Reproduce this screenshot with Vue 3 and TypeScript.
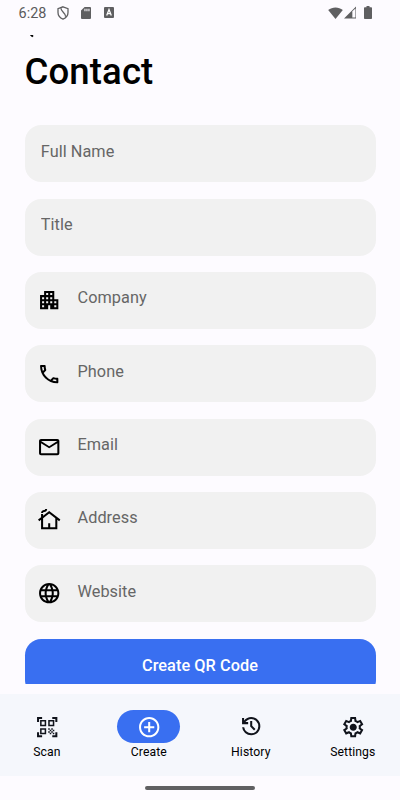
<script setup lang="ts">
import { reactive, ref } from 'vue'

interface Field {
  key: string
  label: string
  icon?: string
}

interface Tab {
  label: string
  icon: string
  viewBox: string
}

const fields: Field[] = [
  { key: 'name', label: 'Full Name' },
  { key: 'title', label: 'Title' },
  {
    key: 'company',
    label: 'Company',
    icon: 'M17 11V3H7v4H3v14h8v-4h2v4h8V11h-4zM7 19H5v-2h2v2zm0-4H5v-2h2v2zm0-4H5V9h2v2zm4 4H9v-2h2v2zm0-4H9V9h2v2zm0-4H9V5h2v2zm4 8h-2v-2h2v2zm0-4h-2V9h2v2zm0-4h-2V5h2v2zm4 12h-2v-2h2v2zm0-4h-2v-2h2v2z',
  },
  {
    key: 'phone',
    label: 'Phone',
    icon: 'M6.54 5c.06.89.21 1.76.45 2.59l-1.2 1.2c-.41-1.2-.67-2.47-.76-3.79h1.51m9.86 12.02c.85.24 1.72.39 2.6.45v1.49c-1.32-.09-2.59-.35-3.8-.75l1.2-1.19M7.5 3H4c-.55 0-1 .45-1 1 0 9.39 7.61 17 17 17 .55 0 1-.45 1-1v-3.49c0-.55-.45-1-1-1-1.24 0-2.45-.2-3.57-.57-.1-.04-.21-.05-.31-.05-.26 0-.51.1-.71.29l-2.2 2.2c-2.83-1.45-5.15-3.76-6.59-6.59l2.2-2.2c.28-.28.36-.67.25-1.02C8.7 6.45 8.5 5.25 8.5 4c0-.55-.45-1-1-1z',
  },
  {
    key: 'email',
    label: 'Email',
    icon: 'M22 6c0-1.1-.9-2-2-2H4c-1.1 0-2 .9-2 2v12c0 1.1.9 2 2 2h16c1.1 0 2-.9 2-2V6zm-2 0l-8 5-8-5h16zm0 12H4V8l8 5 8-5v10z',
  },
  {
    key: 'address',
    label: 'Address',
    icon: 'M12 3L6 7.58V6H4v3.11L1 11.4l1.21 1.59L4 11.62V21h16v-9.38l1.79 1.36L23 11.4 12 3zm6 16h-5v-4h-2v4H6v-8.9l6-4.58 6 4.58V19zM10 1c0 1.66-1.34 3-3 3-.55 0-1 .45-1 1H4c0-1.66 1.34-3 3-3 .55 0 1-.45 1-1h2z',
  },
  {
    key: 'website',
    label: 'Website',
    icon: 'M11.99 2C6.47 2 2 6.48 2 12s4.47 10 9.99 10C17.52 22 22 17.52 22 12S17.52 2 11.99 2zm6.93 6h-2.95c-.32-1.25-.78-2.45-1.38-3.56 1.84.63 3.37 1.91 4.33 3.56zM12 4.04c.83 1.2 1.48 2.53 1.91 3.96h-3.82c.43-1.43 1.08-2.76 1.91-3.96zM4.26 14C4.1 13.36 4 12.69 4 12s.1-1.36.26-2h3.38c-.08.66-.14 1.32-.14 2s.06 1.34.14 2H4.26zm.82 2h2.95c.32 1.25.78 2.45 1.38 3.56-1.84-.63-3.37-1.9-4.33-3.56zm2.95-8H5.08c.96-1.66 2.49-2.93 4.33-3.56C8.81 5.55 8.35 6.75 8.03 8zM12 19.96c-.83-1.2-1.48-2.53-1.91-3.96h3.82c-.43 1.43-1.08 2.76-1.91 3.96zM14.34 14H9.66c-.09-.66-.16-1.32-.16-2s.07-1.35.16-2h4.68c.09.65.16 1.32.16 2s-.07 1.34-.16 2zm.25 5.56c.6-1.11 1.06-2.31 1.38-3.56h2.95c-.96 1.65-2.49 2.93-4.33 3.56zM16.36 14c.08-.66.14-1.32.14-2s-.06-1.34-.14-2h3.38c.16.64.26 1.31.26 2s-.1 1.36-.26 2h-3.38z',
  },
]

const tabs: Tab[] = [
  {
    label: 'Scan',
    viewBox: '0 0 24 24',
    icon: 'M9.5 6.5v3h-3v-3h3M11 5H5v6h6V5zM9.5 14.5v3h-3v-3h3M11 13H5v6h6v-6zM17.5 6.5v3h-3v-3h3M19 5h-6v6h6V5zM13 13h1.5v1.5H13V13zM14.5 14.5H16V16h-1.5v-1.5zM16 13h1.5v1.5H16V13zM13 16h1.5v1.5H13V16zM14.5 17.5H16V19h-1.5v-1.5zM16 16h1.5v1.5H16V16zM17.5 14.5H19V16h-1.5v-1.5zM17.5 17.5H19V19h-1.5v-1.5zM22 7h-2V4h-3V2h5v5zM22 22v-5h-2v3h-3v2h5zM2 22h5v-2H4v-3H2v5zM2 2v5h2V4h3V2H2z',
  },
  {
    label: 'Create',
    viewBox: '0 0 24 24',
    icon: 'M13 7h-2v4H7v2h4v4h2v-4h4v-2h-4V7zm-1-5C6.48 2 2 6.48 2 12s4.48 10 10 10 10-4.48 10-10S17.52 2 12 2zm0 18c-4.41 0-8-3.59-8-8s3.59-8 8-8 8 3.59 8 8-3.59 8-8 8z',
  },
  {
    label: 'History',
    viewBox: '0 -920 960 960',
    icon: 'M480-120q-138 0-240.5-91.5T122-440h82q14 104 92.5 172T480-200q117 0 198.5-81.5T760-480q0-117-81.5-198.5T480-760q-69 0-129 32t-101 88h110v80H120v-240h80v94q51-64 124.5-99T480-840q75 0 140.5 28.5t114 77q48.5 48.5 77 114T840-480q0 75-28.5 140.5t-77 114q-48.5 48.5-114 77T480-120Zm112-192L440-464v-216h80v184l128 128-56 56Z',
  },
  {
    label: 'Settings',
    viewBox: '0 -960 960 960',
    icon: 'm370-80-16-128q-13-5-24.5-12T307-235l-119 50L78-375l103-78q-1-7-1-13.5v-27q0-6.5 1-13.5L78-585l110-190 119 50q11-8 23-15t24-12l16-128h220l16 128q13 5 24.5 12t22.5 15l119-50 110 190-103 78q1 7 1 13.5v27q0 6.5-2 13.5l103 78-110 190-118-50q-11 8-23 15t-24 12L590-80H370Zm70-80h79l14-106q31-8 57.5-23.5T639-327l99 41 39-68-86-65q5-14 7-29.5t2-31.5q0-16-2-31.5t-7-29.5l86-65-39-68-99 42q-22-23-48.5-38.5T533-694l-13-106h-79l-14 106q-31 8-57.5 23.5T321-633l-99-41-39 68 86 64q-5 15-7 30t-2 32q0 16 2 31t7 30l-86 65 39 68 99-42q22 23 48.5 38.5T427-266l13 106Zm42-180q58 0 99-41t41-99q0-58-41-99t-99-41q-59 0-99.5 41T342-480q0 58 40.5 99t99.5 41Z',
  },
]

const values = reactive<Record<string, string>>({})
const active = ref('Create')
</script>

<template>
  <div class="screen">
    <header class="status">
      <span class="clock">6:28</span>
      <svg class="shield" viewBox="0 0 12 14">
        <path d="M6 .8 11 2.6V6.6C11 9.6 9 12 6 13.1 3 12 1 9.6 1 6.6V2.6Z" />
        <path d="M4 2.2C3.6 5.6 8.8 6.4 8.6 10.8" />
      </svg>
      <svg class="sd" viewBox="0 0 10 12">
        <path fill-rule="evenodd" d="M3.6 0H9a1 1 0 0 1 1 1v10a1 1 0 0 1-1 1H1a1 1 0 0 1-1-1V3.6ZM3.4 1.8v2.4h1.1V1.8ZM5.4 1.8v2.4h1.1V1.8ZM7.4 1.8v2.4h1.1V1.8Z" />
      </svg>
      <svg class="badge" viewBox="0 0 10 11">
        <rect width="10" height="11" rx="1" />
        <path d="M2.7 8.4 5 2.6 7.3 8.400M3.6 6.700h2.8" />
      </svg>
      <span class="spacer"></span>
      <svg class="wifi" viewBox="0 0 15 12">
        <path d="M7.5 12 .2 3C4.2-.5 10.8-.5 14.8 3Z" />
      </svg>
      <svg class="signal" viewBox="0 0 12 12">
        <path fill-rule="evenodd" d="M12 0v12H0ZM8 5V11.100H11V2.300Z" />
      </svg>
      <svg class="battery" viewBox="0 0 8 13">
        <path d="M2.5 0h3v1.2H7.2a.8.8 0 0 1 .8.8v10.2a.8.8 0 0 1-.8.8H.8a.8.8 0 0 1-.8-.8V2a.8.8 0 0 1 .8-.8H2.5Z" />
      </svg>
    </header>

    <main class="content">
      <svg class="back" viewBox="0 0 24 24">
        <path d="M20 11H7.83l5.59-5.59L12 4l-8 8 8 8 1.41-1.41L7.83 13H20v-2z" />
      </svg>
      <h1 class="title">Contact</h1>
      <form class="form" @submit.prevent>
        <label v-for="field in fields" :key="field.key" class="field">
          <svg v-if="field.icon" class="field-icon" viewBox="0 0 24 24">
            <path :d="field.icon" />
          </svg>
          <input v-model="values[field.key]" class="input" type="text" :placeholder="field.label" />
        </label>
        <button class="submit" type="submit">Create QR Code</button>
      </form>
    </main>

    <nav class="tabs">
      <button
        v-for="tab in tabs"
        :key="tab.label"
        class="tab"
        :class="{ active: active === tab.label }"
        type="button"
        @click="active = tab.label"
      >
        <span class="pill">
          <svg class="tab-icon" :viewBox="tab.viewBox"><path :d="tab.icon" /></svg>
        </span>
        <span class="tab-label">{{ tab.label }}</span>
      </button>
    </nav>
    <footer class="gesture"><span class="handle"></span></footer>
  </div>
</template>

<style>
body {
  margin: 0;
  background: #fdfbff;
}
</style>

<style scoped>
.screen {
  display: flex;
  flex-direction: column;
  width: 400px;
  height: 800px;
  overflow: hidden;
  background: #fdfbff;
  color: #000;
  font-family: Roboto, 'Liberation Sans', sans-serif;
}

.status {
  display: flex;
  align-items: center;
  box-sizing: border-box;
  flex: none;
  height: 35px;
  padding: 0 28.5px 10px 18.6px;
  fill: #5f5f61;
}

.clock {
  width: 38.6px;
  padding-top: 1px;
  color: #5a5a5c;
  font-size: 14.4px;
}

.shield {
  width: 12px;
  height: 14px;
  margin-right: 11.5px;
  fill: none;
  stroke: #5f5f61;
  stroke-width: 1.3;
}

.sd {
  width: 10px;
  height: 12px;
  margin-right: 12.9px;
}

.badge {
  width: 10px;
  height: 11px;
}

.badge path {
  fill: none;
  stroke: #fff;
  stroke-width: 1.3;
}

.spacer {
  flex: 1;
}

.wifi {
  width: 15px;
  height: 12px;
  margin-right: 1px;
}

.signal {
  width: 12.5px;
  height: 12.5px;
  margin-right: 7.5px;
}

.battery {
  width: 8px;
  height: 13px;
}

.content {
  flex: none;
  box-sizing: border-box;
  height: 649px;
  padding: 0 24.5px;
  overflow: hidden;
}

.back {
  display: block;
  width: 24.4px;
  height: 24.4px;
  margin: -18.4px 0 0 -4.2px;
}

.title {
  margin: 10px 0 32.5px;
  font-size: 36.6px;
  font-weight: 500;
  line-height: 41.7px;
  letter-spacing: 0.1px;
}

.form {
  display: flex;
  flex-direction: column;
  gap: 16.3px;
}

.field {
  display: flex;
  align-items: center;
  gap: 16.3px;
  box-sizing: border-box;
  flex: none;
  height: 57.04px;
  padding: 0 16.3px;
  border-radius: 16.3px;
  background: #f1f1f1;
}

.field-icon {
  flex: none;
  width: 24.4px;
  height: 24.4px;
  margin: 0 0 0 -4px;
}

.input {
  flex: 1;
  min-width: 0;
  margin: 0 0 4px;
  padding: 0;
  border: 0;
  outline: 0;
  background: none;
  color: #000;
  font: 400 16.3px/24px Roboto, 'Liberation Sans', sans-serif;
  letter-spacing: 0.05px;
}

.input::placeholder {
  color: #666;
  opacity: 1;
}

.submit {
  flex: none;
  height: 57px;
  padding: 0 0 3px;
  border: 0;
  border-radius: 16.3px;
  background: #396ff1;
  color: #fff;
  font: 500 16.3px/24px Roboto, 'Liberation Sans', sans-serif;
  letter-spacing: 0.06px;
}

.tabs {
  display: grid;
  grid-template-columns: repeat(4, 1fr);
  gap: 8.2px;
  box-sizing: border-box;
  flex: none;
  height: 82px;
  margin-top: 10px;
  padding: 16.3px 0.3px 0 0;
  background: #f5f7fc;
}

.tab {
  display: flex;
  flex-direction: column;
  align-items: center;
  gap: 1px;
  padding: 0;
  border: 0;
  background: none;
  color: #000;
  font: 400 12.2px/16.3px Roboto, 'Liberation Sans', sans-serif;
  letter-spacing: 0.1px;
}

.pill {
  display: flex;
  align-items: center;
  justify-content: center;
  width: 62.8px;
  height: 33px;
  border-radius: 16.5px;
}

.active .pill {
  background: #396ff1;
}

.tab-icon {
  width: 24.4px;
  height: 24.4px;
  fill: #10131b;
}

.active .tab-icon {
  fill: #fff;
}

.gesture {
  display: flex;
  flex: 1;
  align-items: center;
  justify-content: center;
}

.handle {
  width: 110px;
  height: 4px;
  border-radius: 2px;
  background: #606062;
}
</style>
